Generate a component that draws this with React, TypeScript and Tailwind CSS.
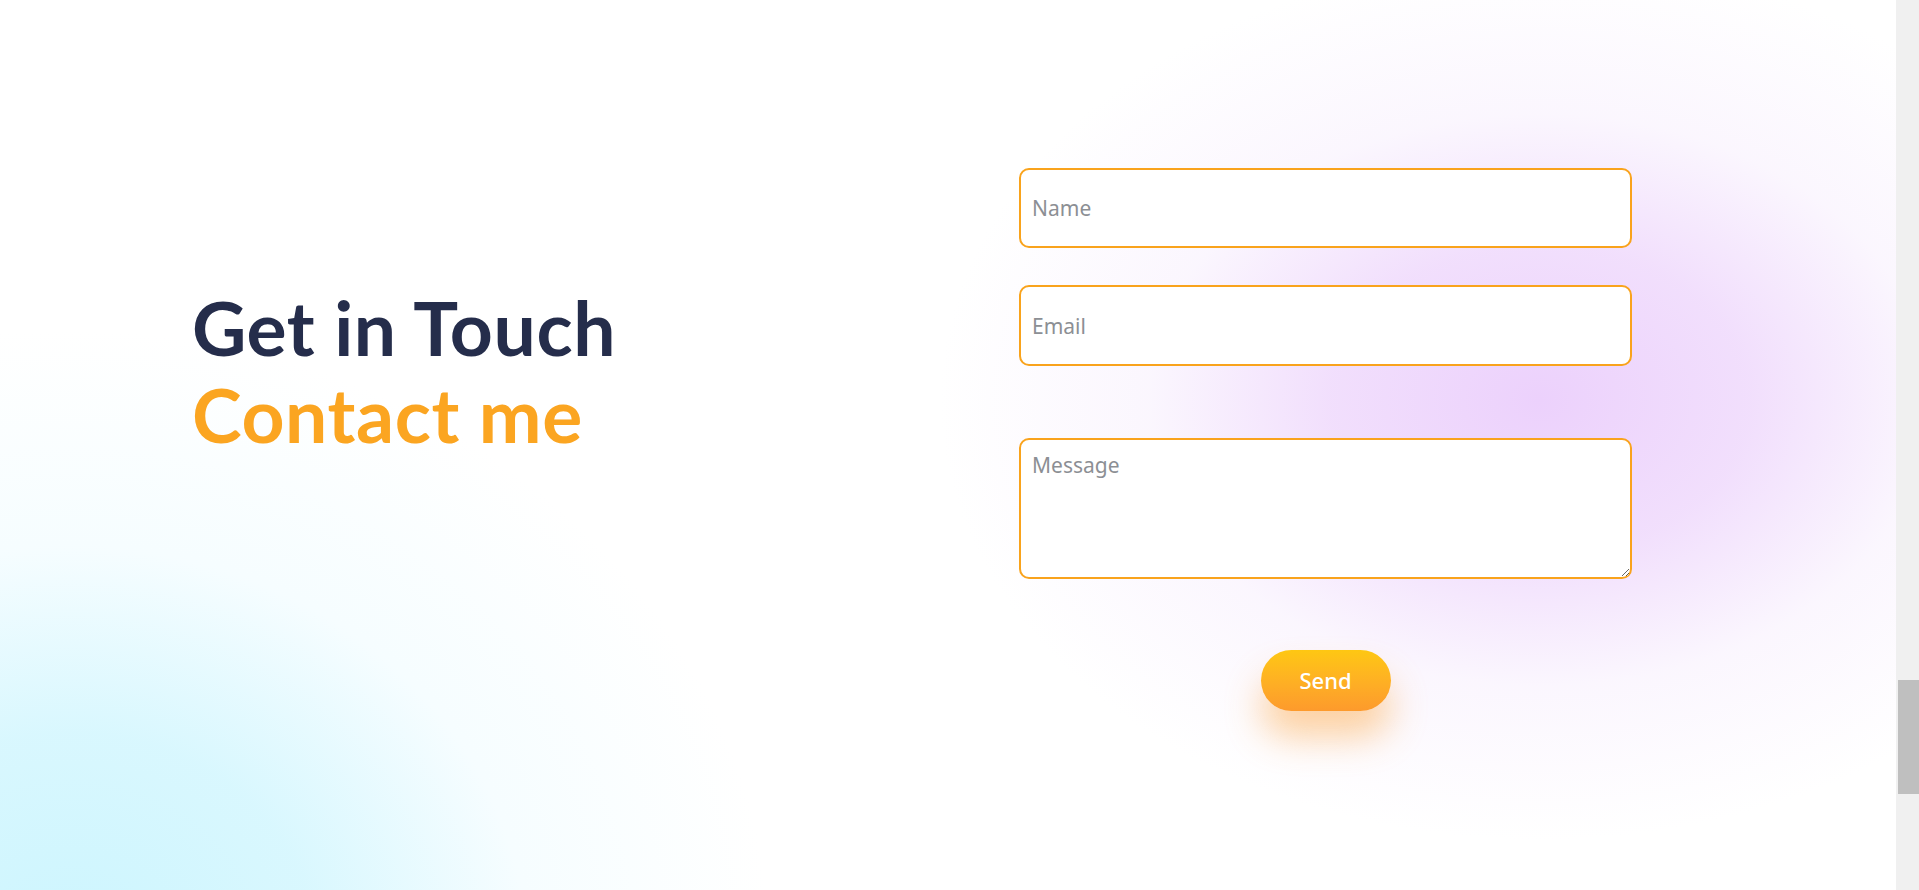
import React from "react";

export default function App() {
  return (
    <div className="flex w-full h-[890px] overflow-hidden bg-white">
      <main className="flex-1 h-full flex items-start bg-[radial-gradient(ellipse_600px_440px_at_1540px_400px,rgba(236,209,252,1)_0%,rgba(239,217,252,0.85)_35%,rgba(246,236,253,0.45)_65%,rgba(255,255,255,0)_100%),radial-gradient(ellipse_700px_620px_at_70px_950px,rgba(204,245,254,1)_0%,rgba(210,246,254,0.85)_35%,rgba(232,250,255,0.4)_65%,rgba(255,255,255,0)_100%)] bg-white">
        <div className="flex items-start pl-[192px] pt-[168px] w-full">
          <div className="w-[827px] mt-[116px] font-['Lato',sans-serif] font-bold text-[75px] leading-[87px] tracking-[0.6px]">
            <h2 className="text-[#252d4b]">Get in Touch</h2>
            <h2 className="text-[#fba521]">Contact me</h2>
          </div>
          <form className="w-[613px] flex flex-col font-['Noto_Sans',sans-serif]" onSubmit={(e) => e.preventDefault()}>
            <input
              type="text"
              placeholder="Name"
              className="h-[80px] w-full bg-white border-2 border-[#f9a31c] rounded-[10px] px-[11px] text-[21px] text-[#333] placeholder:text-[#8c8f94] outline-none"
            />
            <input
              type="email"
              placeholder="Email"
              className="mt-[37px] h-[81px] w-full bg-white border-2 border-[#f9a31c] rounded-[10px] px-[11px] text-[21px] text-[#333] placeholder:text-[#8c8f94] outline-none"
            />
            <textarea
              placeholder="Message"
              className="mt-[72px] h-[141px] w-full bg-white border-2 border-[#f9a31c] rounded-[10px] px-[11px] pt-[10px] text-[21px] text-[#333] placeholder:text-[#8c8f94] outline-none"
            />
            <div className="flex justify-center mt-[71px]">
              <button
                type="submit"
                className="w-[130px] h-[61px] rounded-full bg-gradient-to-b from-[#fec712] to-[#fd9a2c] text-white text-[22px] font-medium shadow-[0_26px_36px_rgba(253,160,50,0.45)]"
              >
                Send
              </button>
            </div>
          </form>
        </div>
      </main>
      <div className="w-[23px] h-full bg-[#f0f0f0] flex flex-col items-end">
        <div className="mt-[680px] w-[21px] h-[114px] bg-[#bfbfbf]" />
      </div>
    </div>
  );
}
